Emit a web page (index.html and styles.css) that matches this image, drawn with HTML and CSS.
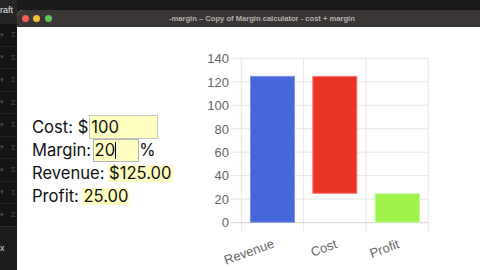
FILE: index.html
```
<!DOCTYPE html>
<html lang="en">
<head>
<meta charset="utf-8">
<title>Margin calculator</title>
<link rel="stylesheet" href="styles.css">
</head>
<body>
<div class="desktop">
  <aside class="sidebar">
    <div class="side-top">raft</div>
    <div class="side-row"><span class="chev">▾</span><span class="sigma">Σ</span></div>
    <div class="side-row"><span class="chev">▾</span><span class="sigma">Σ</span></div>
    <div class="side-row"><span class="chev">▾</span><span class="sigma">Σ</span></div>
    <div class="side-row"><span class="chev">▾</span><span class="sigma">Σ</span></div>
    <div class="side-row"><span class="chev">▾</span><span class="sigma">Σ</span></div>
    <div class="side-row"><span class="chev">▾</span><span class="sigma">Σ</span></div>
    <div class="side-row"><span class="chev">▾</span><span class="sigma">Σ</span></div>
    <div class="side-row"><span class="chev">▾</span><span class="sigma">Σ</span></div>
    <div class="side-row"><span class="chev">▾</span><span class="sigma">Σ</span></div>
    <div class="side-bottom">x</div>
  </aside>
  <div class="window">
    <header class="titlebar">
      <div class="lights"><span class="light red"></span><span class="light yellow"></span><span class="light green"></span></div>
      <div class="title">-margin – Copy of Margin calculator - cost + margin</div>
    </header>
    <main class="content">
      <form class="form">
        <div class="row row-cost">Cost: $<input class="field field-cost" value="100"></div>
        <div class="row row-margin">Margin:<span class="field-wrap"><input class="field field-margin" value="20"><span class="caret"></span></span>%</div>
        <div class="row row-revenue">Revenue:<span class="value">$125.00</span></div>
        <div class="row row-profit">Profit:<span class="value">25.00</span></div>
      </form>
      <svg class="chart" width="245" height="225" viewBox="195 45 245 225" xmlns="http://www.w3.org/2000/svg">
        <g class="grid">
          <line x1="231" y1="58.3" x2="428.3" y2="58.3"/>
          <line x1="231" y1="81.8" x2="428.3" y2="81.8"/>
          <line x1="231" y1="105.3" x2="428.3" y2="105.3"/>
          <line x1="231" y1="128.8" x2="428.3" y2="128.8"/>
          <line x1="231" y1="152.2" x2="428.3" y2="152.2"/>
          <line x1="231" y1="175.7" x2="428.3" y2="175.7"/>
          <line x1="231" y1="199.2" x2="428.3" y2="199.2"/>
          <line x1="303.7" y1="58.3" x2="303.7" y2="231.5"/>
          <line x1="366" y1="58.3" x2="366" y2="231.5"/>
          <line x1="428.3" y1="58.3" x2="428.3" y2="231.5"/>
          <line x1="241.3" y1="58.3" x2="241.3" y2="231.5"/>
        </g>
        <g class="axis">
          <line x1="231" y1="222.7" x2="428.3" y2="222.7"/>
        </g>
        <g class="ylabels">
          <text x="229" y="63">140</text>
          <text x="229" y="86.5">120</text>
          <text x="229" y="110">100</text>
          <text x="229" y="133.5">80</text>
          <text x="229" y="156.9">60</text>
          <text x="229" y="180.4">40</text>
          <text x="229" y="203.9">20</text>
          <text x="229" y="227.4">0</text>
        </g>
        <rect class="bar bar-revenue" x="250.5" y="76.4" width="44" height="145.8"/>
        <rect class="bar bar-cost" x="312.8" y="76.4" width="44" height="116.9"/>
        <rect class="bar bar-profit" x="375.2" y="193.8" width="44.3" height="28.4"/>
        <g class="xlabels">
          <text transform="translate(275 247) rotate(-20)">Revenue</text>
          <text transform="translate(337.8 247.5) rotate(-20)">Cost</text>
          <text transform="translate(400.2 247.5) rotate(-20)">Profit</text>
        </g>
      </svg>
    </main>
  </div>
</div>
</body>
</html>
```
FILE: styles.css
```
html, body {
  margin: 0;
  padding: 0;
}
body {
  width: 480px;
  height: 270px;
  overflow: hidden;
  background: #1b1b1b;
  font-family: "Liberation Sans", Arial, sans-serif;
}
.desktop {
  display: flex;
  height: 270px;
}
.sidebar {
  width: 17px;
  flex-shrink: 0;
  background: #141414;
  display: flex;
  flex-direction: column;
  overflow: hidden;
}
.side-top {
  height: 23px;
  box-sizing: border-box;
  padding-top: 1px;
  background: #262626;
  color: #e4e4e4;
  font-size: 9px;
  line-height: 18px;
  white-space: nowrap;
}
.side-row {
  height: 22.5px;
  box-sizing: border-box;
  border-top: 1px solid #232323;
  display: flex;
  align-items: center;
  justify-content: space-between;
  padding-right: 1px;
  color: #4f4f4f;
  font-size: 7px;
}
.sigma {
  font-size: 8px;
}
.side-bottom {
  flex: 1;
  border-top: 1px solid #2c2c2c;
  background: #1d1d1d;
  color: #d8d8d8;
  font-size: 9px;
  line-height: 42px;
}
.window {
  flex: 1;
  min-width: 0;
  margin-top: 10px;
  border-radius: 6px 0 0 0;
  overflow: hidden;
  background: #ffffff;
  display: flex;
  flex-direction: column;
}
.titlebar {
  height: 16.5px;
  flex-shrink: 0;
  background: #3a3636;
  display: grid;
  grid-template-columns: 152px auto;
  align-items: center;
}
.lights {
  display: flex;
  gap: 4.5px;
  padding-left: 4.5px;
}
.light {
  width: 7px;
  height: 7px;
  border-radius: 50%;
}
.red { background: #ee5f57; }
.yellow { background: #f4bd3e; }
.green { background: #5fc453; }
.title {
  color: #b3aeac;
  font-weight: bold;
  font-size: 7.6px;
  white-space: nowrap;
}
.content {
  flex: 1;
  display: flex;
  align-items: flex-start;
  background: #ffffff;
}
.form {
  width: 178px;
  flex-shrink: 0;
  box-sizing: border-box;
  margin: 0;
  padding: 88.5px 0 0 15px;
  font-family: Inter, "Liberation Sans", sans-serif;
  font-size: 16.6px;
  color: #111;
}
.row {
  display: flex;
  align-items: baseline;
  white-space: pre;
}
.row-cost { height: 24px; line-height: 24px; }
.row-margin { height: 23px; line-height: 23px; }
.row-revenue { height: 23px; line-height: 23px; }
.row-profit { height: 23px; line-height: 23px; }
.field {
  box-sizing: border-box;
  margin: 0;
  padding: 0 1px;
  border: 1px solid #c6c6c6;
  background: #ffffc2;
  font: inherit;
  color: #111;
  outline: none;
}
.field-cost {
  width: 68.5px;
  height: 23.3px;
  margin-left: 1px;
}
.field-wrap {
  position: relative;
  display: inline-flex;
  margin-left: 1.5px;
}
.field-margin {
  width: 46.7px;
  height: 22.7px;
  border-color: #b4b4b4;
}
.caret {
  position: absolute;
  left: 22.2px;
  top: 3px;
  width: 1px;
  height: 17px;
  background: #000;
}
.value {
  display: inline-block;
  height: 17px;
  line-height: 17px;
  margin-left: 3.5px;
  padding: 0 1px;
  background: #ffffc2;
}
.chart {
  display: block;
  margin-top: 18.5px;
  flex-shrink: 0;
}
.grid line {
  stroke: #e6e6e6;
  stroke-width: 1;
}
.axis line {
  stroke: #d6d6d6;
  stroke-width: 1;
}
.ylabels text {
  font-family: "Liberation Sans", Arial, sans-serif;
  font-size: 13px;
  fill: #666;
  text-anchor: end;
}
.xlabels text {
  font-family: "Liberation Sans", Arial, sans-serif;
  font-size: 13px;
  fill: #666;
  text-anchor: end;
}
.bar {
  stroke-width: 1;
}
.bar-revenue { fill: #4766d9; stroke: #7890e6; }
.bar-cost { fill: #ea3526; stroke: #f27a70; }
.bar-profit { fill: #9ff34a; stroke: #c2f78e; }
```
